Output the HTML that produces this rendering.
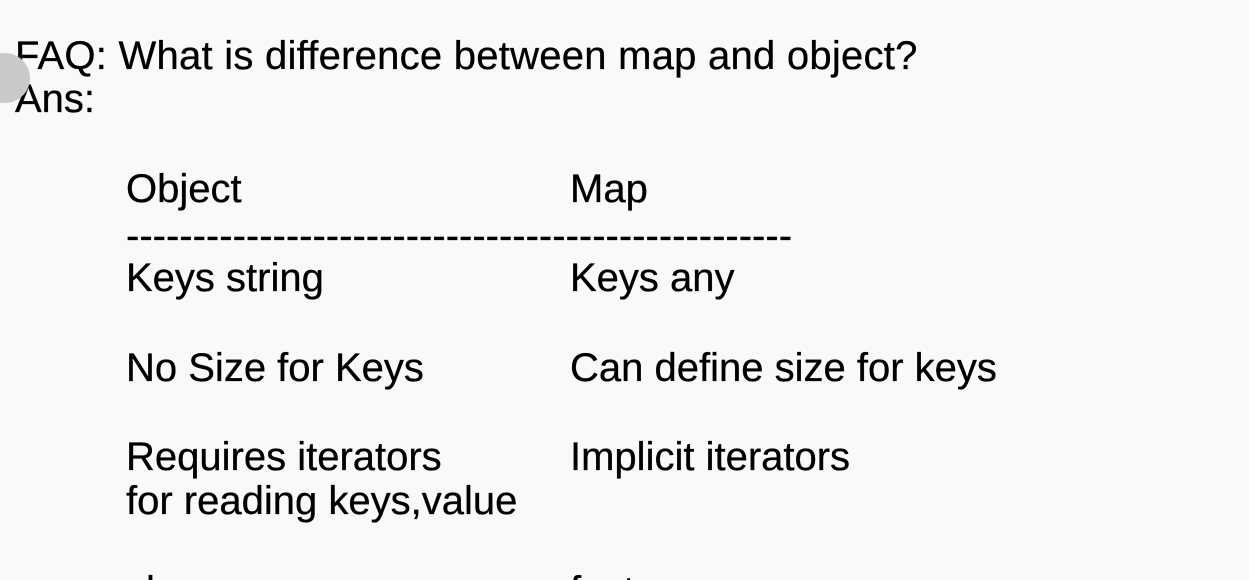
<!DOCTYPE html>
<html style="width:1249px;height:580px;overflow:hidden"><head><style>
body{margin:0;width:1249px;height:580px;background:#f9f9f9;overflow:hidden;font-family:"Liberation Sans",Arial,sans-serif;color:#000}
#w{position:relative;width:1249px;height:580px;overflow:hidden}
.t{position:absolute;font-size:40px;line-height:40px;white-space:nowrap;-webkit-text-stroke:0.3px #000}
.c{position:absolute;left:-20px;top:53px;width:50px;height:50px;border-radius:50%;background:#c9c9c9}
</style></head><body><div id="w">
<div class="t" style="left:15px;top:36px;letter-spacing:0.25px">FAQ: What is difference between map and object?</div>
<div class="t" style="left:15px;top:79px">Ans:</div>
<div class="c"></div>
<div class="t" style="left:126px;top:169px">Object</div>
<div class="t" style="left:570px;top:169px">Map</div>
<div class="t" style="left:126px;top:216px">--------------------------------------------------</div>
<div class="t" style="left:126px;top:258px">Keys string</div>
<div class="t" style="left:570px;top:258px">Keys any</div>
<div class="t" style="left:126px;top:348px">No Size for Keys</div>
<div class="t" style="left:570px;top:348px">Can define size for keys</div>
<div class="t" style="left:126px;top:437px">Requires iterators</div>
<div class="t" style="left:570px;top:437px">Implicit iterators</div>
<div class="t" style="left:126px;top:481px">for reading keys,value</div>
<div style="position:absolute;left:0;top:560px;width:1249px;height:20px;overflow:hidden">
<div class="t" style="left:126px;top:11px">slow</div>
<div class="t" style="left:570px;top:11px">fast</div>
</div>
</div></body></html>
